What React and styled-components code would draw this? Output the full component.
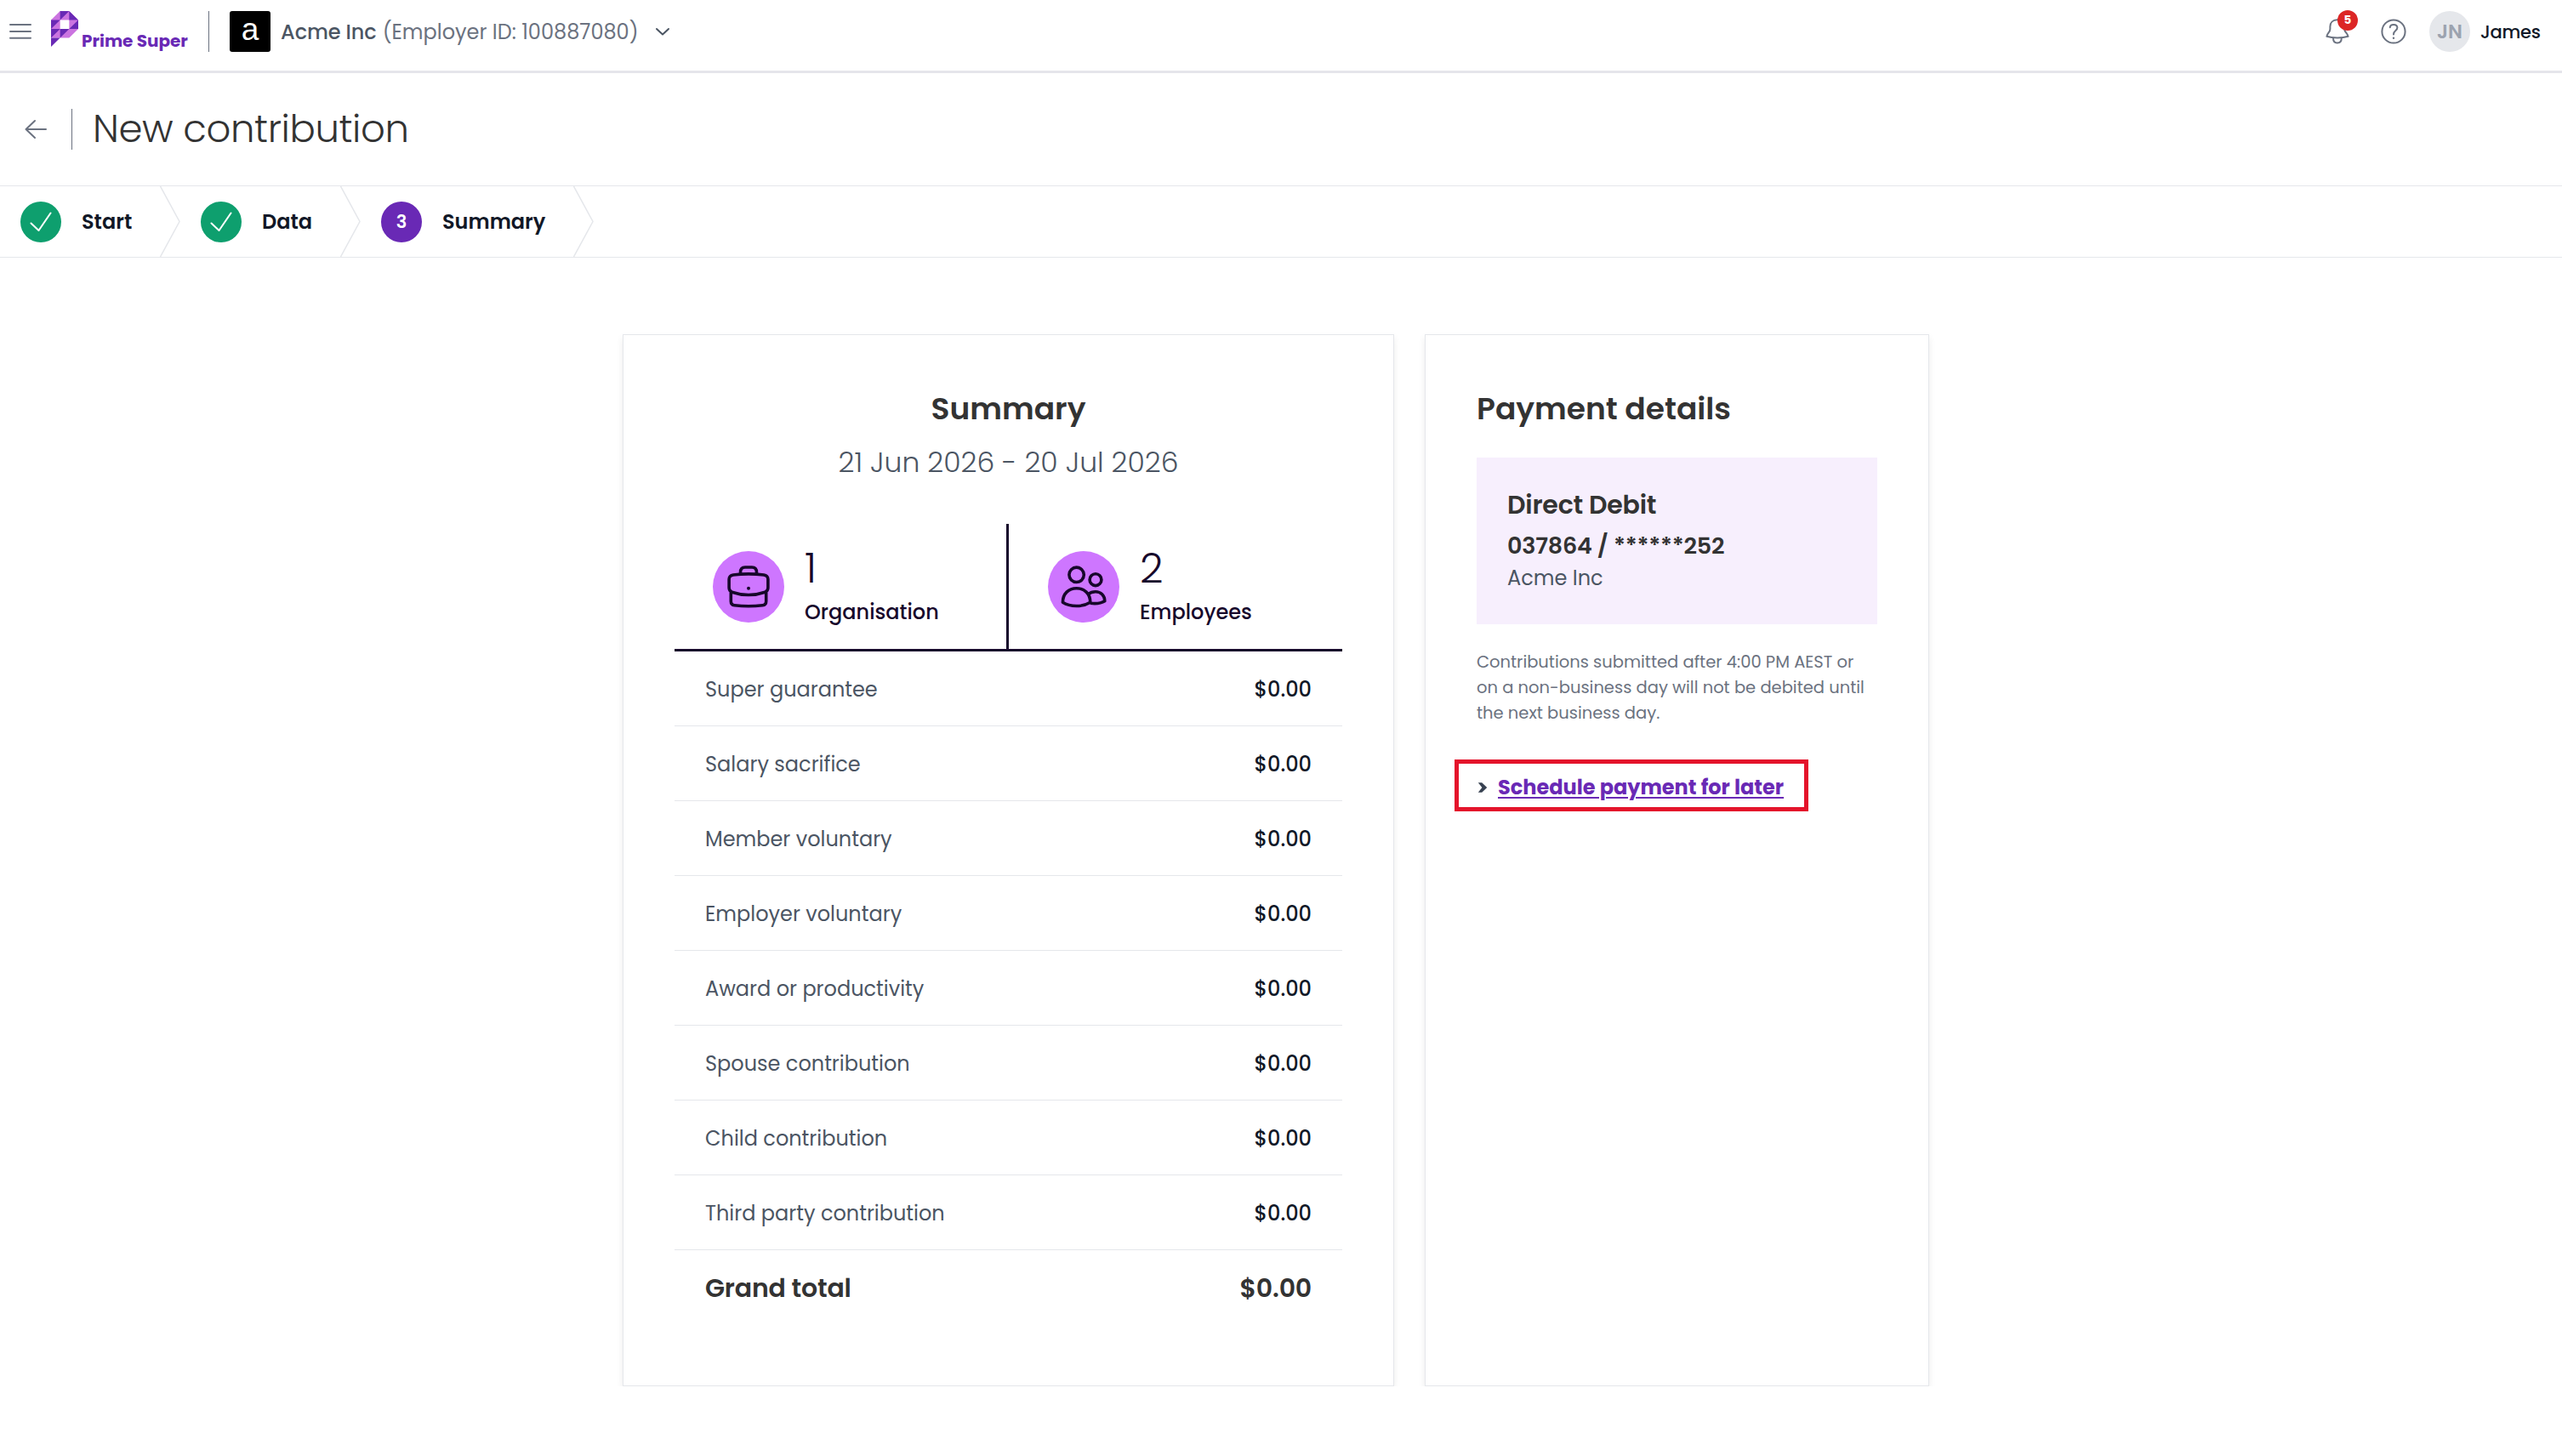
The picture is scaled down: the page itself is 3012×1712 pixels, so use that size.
import React from 'react';
import styled, { createGlobalStyle } from 'styled-components';


const steps = [
    { label: 'Start', done: true, width: 212 },
    { label: 'Data', done: true, width: 212 },
    { label: 'Summary', done: false, width: 274 },
];

const rows = [
    { label: 'Super guarantee', amount: '$0.00' },
    { label: 'Salary sacrifice', amount: '$0.00' },
    { label: 'Member voluntary', amount: '$0.00' },
    { label: 'Employer voluntary', amount: '$0.00' },
    { label: 'Award or productivity', amount: '$0.00' },
    { label: 'Spouse contribution', amount: '$0.00' },
    { label: 'Child contribution', amount: '$0.00' },
    { label: 'Third party contribution', amount: '$0.00' },
];

function MenuIcon() {
    return (
        <svg width="28" height="20" viewBox="0 0 28 20" fill="none" stroke="#6b7280" strokeWidth="2" strokeLinecap="round">
            <path d="M2 2H26M2 10H26M2 17.8H26" />
        </svg>
    );
}

function Logo() {
    return (
        <svg width="32" height="42" viewBox="0 0 3 4" preserveAspectRatio="none">
            <path fill="#cb74e0" d="M0 1L1 0H2L3 1V2L2 3H0V1Z" />
            <path fill="#fff" d="M1 1H2V2H1Z" />
            <path fill="#6929b5" d="M1 0H2L1 1ZM2 0L3 1H2ZM0 1H1L0 2ZM3 1V2H2ZM0 2H1L0 3ZM1 2H2L1 3ZM0 3H1L0 4Z" />
        </svg>
    );
}

function ChevronDown() {
    return (
        <svg width="18" height="12" viewBox="0 0 18 12" fill="none" stroke="#4b5563" strokeWidth="2" strokeLinecap="round" strokeLinejoin="round">
            <path d="M2 3L9 9.5L16 3" />
        </svg>
    );
}

function BellIcon() {
    return (
        <svg width="30" height="34" viewBox="0 0 30 34" fill="none" stroke="#6b7280" strokeWidth="2" strokeLinejoin="round">
            <path d="M14.8 3.3C9.4 3.3 6.4 6.8 6.4 11.3V14.2C6.4 18 2.8 19 2.4 22.8C9.5 25 20.5 25 27.6 22.8C27 19 23.2 18 23.2 14.2V11.3C23.2 6.8 20 3.3 14.8 3.3Z" />
            <path d="M10 24.6C10 28.6 12 30.6 14.8 30.6S19.8 28.6 19.8 24.6" />
        </svg>
    );
}

function HelpIcon() {
    return (
        <svg width="32" height="32" viewBox="0 0 32 32" fill="none" stroke="#6b7280" strokeWidth="2" strokeLinecap="round">
            <circle cx="16" cy="16" r="13.6" />
            <path d="M11.8 11.2C12 9 13.6 7.9 16 7.9C18.6 7.9 20.4 9.4 20.4 11.6C20.4 15.4 16 14.8 16 19.4" />
            <circle cx="16" cy="23.8" r="1.2" fill="#6b7280" stroke="none" />
        </svg>
    );
}

function BackIcon() {
    return (
        <svg width="28" height="24" viewBox="0 0 28 24" fill="none" stroke="#6b7280" strokeWidth="2" strokeLinecap="round" strokeLinejoin="round">
            <path d="M26 12H2.5M13 2L2.5 12L13 22" />
        </svg>
    );
}

function CheckIcon() {
    return (
        <svg width="28" height="26" viewBox="0 0 28 26" fill="none" stroke="#fff" strokeWidth="2" strokeLinecap="round" strokeLinejoin="round">
            <path d="M2.5 14.5L11.5 23L25.5 2.5" />
        </svg>
    );
}

function BriefcaseIcon() {
    return (
        <svg width="84" height="84" viewBox="0 0 84 84" fill="none" stroke="#17072b" strokeWidth="3.6" strokeLinejoin="round">
            <path d="M32.5 27V25C32.5 21 34.5 19 38 19H46C49.5 19 51.5 21 51.5 25V27" />
            <path d="M24 28C34 26.7 50 26.7 60 28C63 28.5 64.8 30.5 64.9 33V43C64.9 46 64 47.3 61.5 48.2C49 52.5 35 52.5 22.5 48.2C20 47.3 19.1 46 19.1 43V33C19.2 30.5 21 28.5 24 28Z" />
            <path d="M21.3 48.5V59C21.3 62 22.5 63.4 25.5 63.8C36 65.1 48 65.1 58.5 63.8C61.5 63.4 62.7 62 62.7 59V48.5" />
            <circle cx="42" cy="43.7" r="2" fill="#17072b" stroke="none" />
        </svg>
    );
}

function PeopleIcon() {
    return (
        <svg width="84" height="84" viewBox="0 0 84 84" fill="none" stroke="#17072b" strokeWidth="3.6" strokeLinejoin="round">
            <circle cx="33.6" cy="27.8" r="8.7" />
            <circle cx="56" cy="33.7" r="6.9" />
            <path d="M17.4 60.3C17.4 50 24.5 43.7 33.6 43.7S49.8 50 49.8 60.3C45 63.3 39.5 64.5 33.6 64.5S22 63.3 17.4 60.3Z" />
            <path d="M47 50.8C49.5 48.8 52.5 47.7 56 47.7C62 47.7 66.8 52 66.8 58.8C62.5 61.5 56 62 49.8 61.3" />
        </svg>
    );
}

function Step({ step, number }) {
    return (
        <StepItem $width={step.width}>
            <StepCircle $done={step.done}>{step.done ? <CheckIcon /> : number}</StepCircle>
            <StepLabel>{step.label}</StepLabel>
            <StepArrow width="24" height="83" viewBox="0 0 24 83" fill="none" stroke="#e5e7eb" strokeWidth="1.5">
                <path d="M0.5 0L23 41.5L0.5 83" />
            </StepArrow>
        </StepItem>
    );
}

function App() {
    return (
        <>
            <GlobalStyle />
            <Header>
                <MenuIcon />
                <Brand>
                    <Logo />
                    <BrandName>Prime Super</BrandName>
                </Brand>
                <Divider />
                <CompanyBadge>a</CompanyBadge>
                <CompanyName>Acme Inc</CompanyName>
                <EmployerId>(Employer ID: 100887080)</EmployerId>
                <ChevronDown />
                <UserArea>
                    <Bell>
                        <BellIcon />
                        <Count>5</Count>
                    </Bell>
                    <HelpIcon />
                    <Avatar>JN</Avatar>
                    <UserName>James</UserName>
                </UserArea>
            </Header>

            <TitleBar>
                <BackIcon />
                <Divider />
                <Title>New contribution</Title>
            </TitleBar>

            <Steps>
                {steps.map((step, i) => (
                    <Step key={step.label} step={step} number={i + 1} />
                ))}
            </Steps>

            <Content>
                <SummaryCard>
                    <Heading $center>Summary</Heading>
                    <Period>21 Jun 2026 - 20 Jul 2026</Period>
                    <Stats>
                        <Stat>
                            <StatIcon><BriefcaseIcon /></StatIcon>
                            <StatText>
                                <StatNumber>1</StatNumber>
                                <StatLabel>Organisation</StatLabel>
                            </StatText>
                        </Stat>
                        <Stat>
                            <StatIcon><PeopleIcon /></StatIcon>
                            <StatText>
                                <StatNumber>2</StatNumber>
                                <StatLabel>Employees</StatLabel>
                            </StatText>
                        </Stat>
                    </Stats>
                    {rows.map(row => (
                        <Row key={row.label}>
                            <RowLabel>{row.label}</RowLabel>
                            <Amount>{row.amount}</Amount>
                        </Row>
                    ))}
                    <TotalRow>
                        <span>Grand total</span>
                        <span>$0.00</span>
                    </TotalRow>
                </SummaryCard>

                <PaymentCard>
                    <Heading>Payment details</Heading>
                    <Account>
                        <Method>Direct Debit</Method>
                        <AccountNumber>037864 / ******252</AccountNumber>
                        <AccountName>Acme Inc</AccountName>
                    </Account>
                    <Notice>
                        Contributions submitted after 4:00 PM AEST or on a non-business day will not be debited until the next business day.
                    </Notice>
                    <Schedule>
                        <svg width="12" height="14" viewBox="0 0 12 14" fill="#374151">
                            <path d="M0.8 1.3H5.2L11.2 7L5.2 12.7H0.8L5.4 7Z" />
                        </svg>
                        <ScheduleLink href="#">Schedule payment for later</ScheduleLink>
                    </Schedule>
                </PaymentCard>
            </Content>
        </>
    );
}

export default App;

const GlobalStyle = createGlobalStyle`
    * {
        box-sizing: border-box;
    }
    body {
        margin: 0;
        background: #fff;
        color: #333;
        font-family: Poppins, Inter, "Liberation Sans", sans-serif;
    }
    svg {
        display: block;
        flex-shrink: 0;
    }
`
const Header = styled.header`
    display: flex;
    align-items: center;
    height: 86px;
    padding: 0 24px 9px 10px;
    border-bottom: 3px solid #e5e5eb;
`
const Brand = styled.div`
    display: flex;
    align-items: flex-end;
    height: 48px;
    padding-bottom: 6px;
    margin-left: 22px;
    margin-right: 23px;
    width: 162px;
`
const BrandName = styled.span`
    margin-left: 4px;
    margin-bottom: -7px;
    font-size: 20px;
    line-height: 28px;
    font-weight: 700;
    white-space: nowrap;
    color: #6929b5;
`
const Divider = styled.div`
    width: 1px;
    height: 48px;
    background: #6b7280;
`
const CompanyBadge = styled.div`
    display: flex;
    align-items: center;
    justify-content: center;
    width: 48px;
    height: 48px;
    margin-left: 24px;
    padding-bottom: 4px;
    border-radius: 3px;
    background: #000;
    color: #fff;
    font-family: "Liberation Sans", sans-serif;
    font-size: 37px;
`
const CompanyName = styled.span`
    margin-left: 12px;
    font-size: 24px;
    font-weight: 500;
    letter-spacing: -0.1px;
    color: #4b5563;
`
const EmployerId = styled.span`
    margin-left: 7px;
    margin-right: 19px;
    font-size: 24px;
    color: #6b7280;
`
const UserArea = styled.div`
    display: flex;
    align-items: center;
    margin-left: auto;
`
const Bell = styled.div`
    position: relative;
    margin-right: 35px;
`
const Count = styled.span`
    position: absolute;
    top: -8px;
    left: 15px;
    width: 24px;
    height: 24px;
    border-radius: 50%;
    background: #dc2626;
    color: #fff;
    font-size: 13.5px;
    font-weight: 700;
    line-height: 23px;
    text-align: center;
`
const Avatar = styled.div`
    width: 48px;
    height: 48px;
    margin-left: 26px;
    border-radius: 50%;
    background: #e5e7eb;
    color: #9ca3af;
    font-size: 23px;
    font-weight: 600;
    line-height: 48px;
    text-align: center;
`
const UserName = styled.span`
    margin-left: 12px;
    width: 72px;
    font-size: 21px;
    font-weight: 500;
    letter-spacing: -0.3px;
    color: #111827;
`
const TitleBar = styled.div`
    display: flex;
    align-items: center;
    height: 132px;
    padding-left: 28px;

    ${Divider} {
        margin-left: 28px;
    }
`
const Title = styled.h1`
    margin: 0 0 0 24px;
    font-size: 45px;
    font-weight: 300;
    letter-spacing: -0.4px;
`
const Steps = styled.div`
    display: flex;
    height: 85px;
    border-top: 1px solid #e5e7eb;
    border-bottom: 1px solid #e5e7eb;
`
const StepItem = styled.div`
    display: flex;
    align-items: center;
    width: ${props => props.$width}px;
    padding-left: 24px;
`
const StepCircle = styled.div`
    display: flex;
    align-items: center;
    justify-content: center;
    width: 48px;
    height: 48px;
    border-radius: 50%;
    background: ${props => props.$done ? '#0e9f6e' : '#6929b5'};
    color: #fff;
    font-size: 21px;
    font-weight: 600;
`
const StepLabel = styled.span`
    margin-left: 24px;
    font-size: 24px;
    font-weight: 600;
    color: #111827;
`
const StepArrow = styled.svg`
    margin-left: auto;
`
const Content = styled.main`
    display: flex;
    justify-content: center;
    gap: 36px;
    padding: 90px 12px 0 0;
`
const Card = styled.section`
    height: 1237px;
    padding: 60px 60px 0;
    border: 1px solid #e5e7eb;
    background: #fff;
    box-shadow: 0 4px 8px rgba(0, 0, 0, 0.08);
`
const SummaryCard = styled(Card)`
    width: 907px;
`
const PaymentCard = styled(Card)`
    width: 593px;
`
const Heading = styled.h2`
    margin: 0;
    font-size: 36px;
    font-weight: 600;
    line-height: 54px;
    text-align: ${props => props.$center ? 'center' : 'left'};
`
const Period = styled.div`
    margin-top: 10px;
    font-size: 33px;
    font-weight: 300;
    line-height: 51px;
    text-align: center;
    color: #4b5563;
`
const Stats = styled.div`
    display: flex;
    margin-top: 47px;
    border-bottom: 3px solid #17072b;
`
const Stat = styled.div`
    display: flex;
    align-items: center;
    gap: 24px;
    width: 390px;
    height: 147px;
    padding-left: 45px;
    color: #17072b;

    & + & {
        flex: 1;
        padding-left: 46px;
        border-left: 3px solid #17072b;
    }
`
const StatIcon = styled.div`
    width: 84px;
    height: 84px;
    border-radius: 50%;
    background: #ce76ff;
`
const StatText = styled.div`
    padding-top: 3px;
`
const StatNumber = styled.div`
    font-size: 48px;
    font-weight: 300;
    line-height: 50px;
`
const StatLabel = styled.div`
    margin-top: 8px;
    font-size: 24px;
    font-weight: 500;
    line-height: 36px;
`
const Row = styled.div`
    display: flex;
    align-items: center;
    justify-content: space-between;
    height: 88px;
    padding: 1px 36px 0;
    border-bottom: 1px solid #e5e7eb;
    font-size: 24px;
`
const RowLabel = styled.span`
    color: #4b5563;
`
const Amount = styled.span`
    font-weight: 500;
    color: #111827;
`
const TotalRow = styled(Row)`
    border-bottom: none;
    font-size: 30px;
    font-weight: 600;
    letter-spacing: -0.2px;
`
const Account = styled.div`
    height: 196px;
    margin-top: 30px;
    padding: 33px 36px 0;
    background: #f7effd;
`
const Method = styled.div`
    font-size: 30px;
    font-weight: 600;
    line-height: 45px;
    letter-spacing: -0.2px;
`
const AccountNumber = styled.div`
    margin-top: 6px;
    font-size: 27px;
    font-weight: 600;
    line-height: 40px;
    letter-spacing: -0.22px;
`
const AccountName = styled.div`
    font-size: 24px;
    line-height: 36px;
    color: #4b5563;
`
const Notice = styled.p`
    margin: 30px 0 0;
    font-size: 19.5px;
    line-height: 30px;
    color: #6b7280;
`
const Schedule = styled.div`
    display: flex;
    align-items: center;
    width: 416px;
    height: 61px;
    margin: 39px 0 0 -26px;
    padding: 4px 0 0 22px;
    border: 5px solid #e4132b;
`
const ScheduleLink = styled.a`
    margin-left: 12px;
    font-size: 24px;
    font-weight: 700;
    white-space: nowrap;
    color: #6929b5;
    text-decoration-thickness: 2px;
    text-underline-offset: 3px;
`
